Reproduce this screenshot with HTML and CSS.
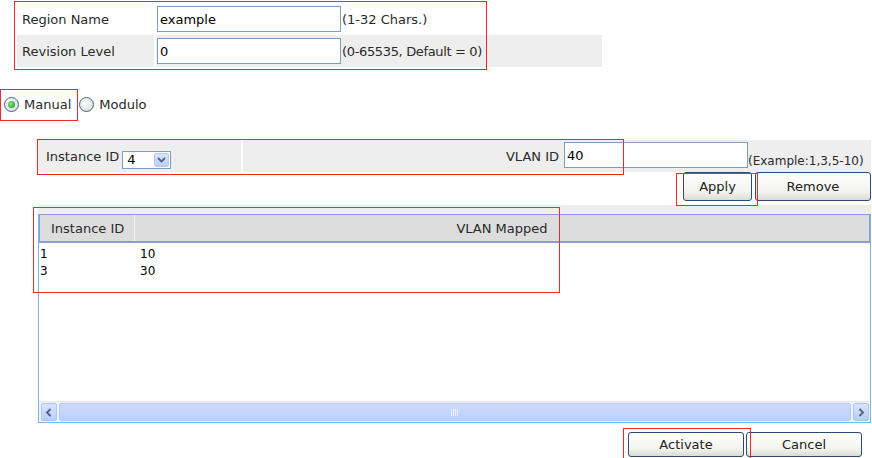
FILE: index.html
```html
<!DOCTYPE html>
<html lang="en">
<head>
    <meta charset="UTF-8">
    <title>MST Region</title>
    <link rel="stylesheet" href="styles.css">
</head>
<body>
<div class="page">
    <!-- Region settings -->
    <table class="region-form">
        <tr>
            <td class="label">Region Name</td>
            <td class="field"><input type="text" class="text-input" value="example"><span class="hint">(1-32 Chars.)</span></td>
        </tr>
        <tr class="alt">
            <td class="label">Revision Level</td>
            <td class="field"><input type="text" class="text-input" value="0"><span class="hint hint-default">(0-65535, Default = 0)</span></td>
        </tr>
    </table>

    <!-- Mapping mode -->
    <div class="mode">
        <label class="mode-item"><span class="radio checked"></span>Manual</label>
        <label class="mode-item"><span class="radio"></span>Modulo</label>
    </div>

    <div class="mapping">
        <div class="map-row">
            <div class="cell-instance">
                <span>Instance ID</span>
                <span class="select">
                    <span class="select-value">4</span>
                    <span class="select-btn">
                        <svg width="9" height="6" viewBox="0 0 9 6"><path d="M1 1 L4.5 4.5 L8 1" fill="none" stroke="#4d6185" stroke-width="1.8"/></svg>
                    </span>
                </span>
            </div>
            <div class="cell-vlan">
                <span>VLAN ID</span>
                <input type="text" class="text-input vlan-input" value="40">
            </div>
            <div class="cell-hint">(Example:1,3,5-10)</div>
        </div>

        <div class="actions">
            <button class="btn btn-apply">Apply</button>
            <button class="btn btn-remove">Remove</button>
        </div>

        <div class="grid">
            <div class="grid-top"></div>
            <div class="grid-frame">
                <div class="grid-head">
                    <div class="col-id">Instance ID</div>
                    <div class="col-vlan">VLAN Mapped</div>
                </div>
                <div class="grid-body">
                    <div class="grid-row"><span class="col-id">1</span><span>10</span></div>
                    <div class="grid-row"><span class="col-id">3</span><span>30</span></div>
                </div>
                <div class="hscroll">
                    <span class="scroll-btn">
                        <svg width="8" height="9" viewBox="0 0 8 9"><path d="M5.5 1 L2 4.5 L5.5 8" fill="none" stroke="#4d6185" stroke-width="1.8"/></svg>
                    </span>
                    <span class="scroll-thumb"><span class="grip"></span></span>
                    <span class="scroll-btn">
                        <svg width="8" height="9" viewBox="0 0 8 9"><path d="M2.5 1 L6 4.5 L2.5 8" fill="none" stroke="#4d6185" stroke-width="1.8"/></svg>
                    </span>
                </div>
            </div>
        </div>
    </div>

    <div class="footer">
        <button class="btn btn-wide">Activate</button>
        <button class="btn btn-wide">Cancel</button>
    </div>

    <!-- highlight marks -->
    <div class="mark mark-region"></div>
    <div class="mark mark-mode"></div>
    <div class="mark mark-row"></div>
    <div class="mark mark-apply"></div>
    <div class="mark mark-grid"></div>
    <div class="mark mark-activate"></div>
</div>
</body>
</html>
```

FILE: styles.css
```css
body {
    margin: 0;
    font-family: "DejaVu Sans", Verdana, sans-serif;
    font-size: 13px;
    color: #2a2a2a;
    background: #fff;
}
.page {
    position: relative;
    width: 872px;
    height: 458px;
    overflow: hidden;
    padding-top: 3px;
    box-sizing: border-box;
}
.region-form {
    margin-left: 17px;
    width: 585px;
    border-collapse: collapse;
}
.region-form td {
    height: 32px;
    padding: 0;
}
.region-form .label {
    width: 132px;
    padding-left: 5px;
    border-right: 2px solid #fff;
}
.region-form .field {
    padding-left: 1px;
}
.region-form .alt td {
    background: #eeeeee;
}
.text-input {
    width: 184px;
    height: 26px;
    box-sizing: border-box;
    border: 1px solid #7f9db9;
    padding: 0 2px;
    font-family: "DejaVu Sans", sans-serif;
    font-size: 13px;
    color: #000;
    vertical-align: middle;
    background: #fff;
}
.hint {
    vertical-align: middle;
    margin-left: 1px;
}
.hint-default {
    letter-spacing: -0.35px;
}
.mode {
    display: flex;
    align-items: center;
    margin-top: 29px;
    padding-left: 4px;
    height: 16px;
}
.mode-item {
    display: flex;
    align-items: center;
    margin-right: 8px;
}
.radio {
    width: 13px;
    height: 13px;
    border: 1px solid #3b6896;
    border-radius: 50%;
    background: radial-gradient(circle at 40% 40%, #fff 0, #e6e6e0 60%, #c9c9c0 100%);
    margin-right: 5px;
    position: relative;
}
.radio.checked::after {
    content: "";
    position: absolute;
    left: 3px;
    top: 3px;
    width: 7px;
    height: 7px;
    border-radius: 50%;
    background: radial-gradient(circle at 40% 40%, #8fe88f 0, #2fa82f 70%);
}
.mapping {
    margin-left: 38px;
    width: 833px;
    margin-top: 28px;
}
.map-row {
    display: flex;
    height: 32px;
    background: #eeeeee;
}
.cell-instance {
    width: 195px;
    padding-left: 8px;
    border-right: 2px solid #fff;
    display: flex;
    align-items: center;
}
.select {
    display: inline-flex;
    align-items: center;
    margin-left: 3px;
    margin-top: 7px;
    width: 49px;
    height: 18px;
    box-sizing: border-box;
    border: 1px solid #7f9db9;
    background: #fff;
    color: #000;
}
.select-value {
    flex: 1;
    padding-left: 4px;
}
.select-btn {
    width: 15px;
    height: 14px;
    margin-right: 1px;
    display: flex;
    align-items: center;
    justify-content: center;
    background: linear-gradient(#dbe6fd, #b9cdf9);
    border: 1px solid #b7c9f3;
    border-radius: 2px;
    box-sizing: border-box;
}
.cell-vlan {
    width: 505px;
    display: flex;
    align-items: center;
    justify-content: flex-end;
    gap: 5px;
}
.cell-hint {
    flex: 1;
    display: flex;
    align-items: flex-end;
    padding-bottom: 4px;
    font-size: 12px;
    white-space: nowrap;
}
.vlan-input {
    align-self: flex-start;
    margin-top: 2px;
}
.actions {
    display: flex;
    justify-content: flex-end;
    gap: 3px;
    height: 33px;
}
.btn {
    font-family: "DejaVu Sans", sans-serif;
    font-size: 13px;
    color: #222;
    border: 1px solid #2e4a72;
    border-radius: 3px;
    background: linear-gradient(#ffffff, #f3f3ee 70%, #dcdcd4);
    padding: 0;
}
.btn-apply {
    width: 69px;
    height: 29px;
}
.btn-remove {
    width: 116px;
    height: 29px;
}
.grid-top {
    height: 9px;
    background: #eeeeee;
}
.grid-frame {
    border: 1px solid #7ab8dc;
    border-top: none;
}
.grid-head {
    display: flex;
    height: 26px;
    align-items: center;
    background: #dddddd;
    border: 1px solid #8d9ad6;
    border-bottom-width: 2px;
}
.grid-head .col-id {
    width: 83px;
    padding-left: 11px;
    height: 100%;
    display: flex;
    align-items: center;
    border-right: 1px solid #f4f4f4;
}
.grid-head .col-vlan {
    flex: 1;
    text-align: center;
}
.grid-body {
    height: 158px;
    padding-top: 2px;
    box-sizing: border-box;
    font-size: 12px;
    color: #000;
    background: #fff;
}
.grid-row {
    display: flex;
    height: 17px;
    align-items: center;
}
.grid-row .col-id {
    width: 100px;
    padding-left: 1px;
}
.hscroll {
    display: flex;
    height: 18px;
    padding: 1px 1px 1px 2px;
    background: #eef3fd;
    border-top: 1px solid #e6e6e6;
}
.scroll-btn {
    width: 16px;
    display: flex;
    align-items: center;
    justify-content: center;
    background: linear-gradient(#d8e4fc, #b8ccf8);
    border: 1px solid #b0c4f2;
    border-radius: 2px;
    box-sizing: border-box;
}
.scroll-thumb {
    flex: 1;
    margin: 0 2px;
    display: flex;
    align-items: center;
    justify-content: center;
    background: linear-gradient(#cddbfb, #bcd0fa);
    border: 1px solid #b5c8f3;
    border-radius: 2px;
}
.grip {
    width: 8px;
    height: 7px;
    background: repeating-linear-gradient(90deg, #eef3ff 0, #eef3ff 1px, transparent 1px, transparent 2px);
}
.footer {
    display: flex;
    justify-content: flex-end;
    gap: 2px;
    padding-right: 10px;
    margin-top: 9px;
}
.btn-wide {
    width: 116px;
    height: 25px;
}
.mark {
    position: absolute;
    border: 1px solid #ee2a2a;
    pointer-events: none;
}
.mark-region { left: 14px; top: 1px; width: 471px; height: 67px; }
.mark-mode { left: 0; top: 89px; width: 76px; height: 30px; }
.mark-row { left: 37px; top: 139px; width: 585px; height: 34px; }
.mark-apply { left: 676px; top: 173px; width: 80px; height: 31px; }
.mark-grid { left: 33px; top: 207px; width: 525px; height: 84px; }
.mark-activate { left: 623px; top: 428px; width: 126px; height: 29px; }
```
